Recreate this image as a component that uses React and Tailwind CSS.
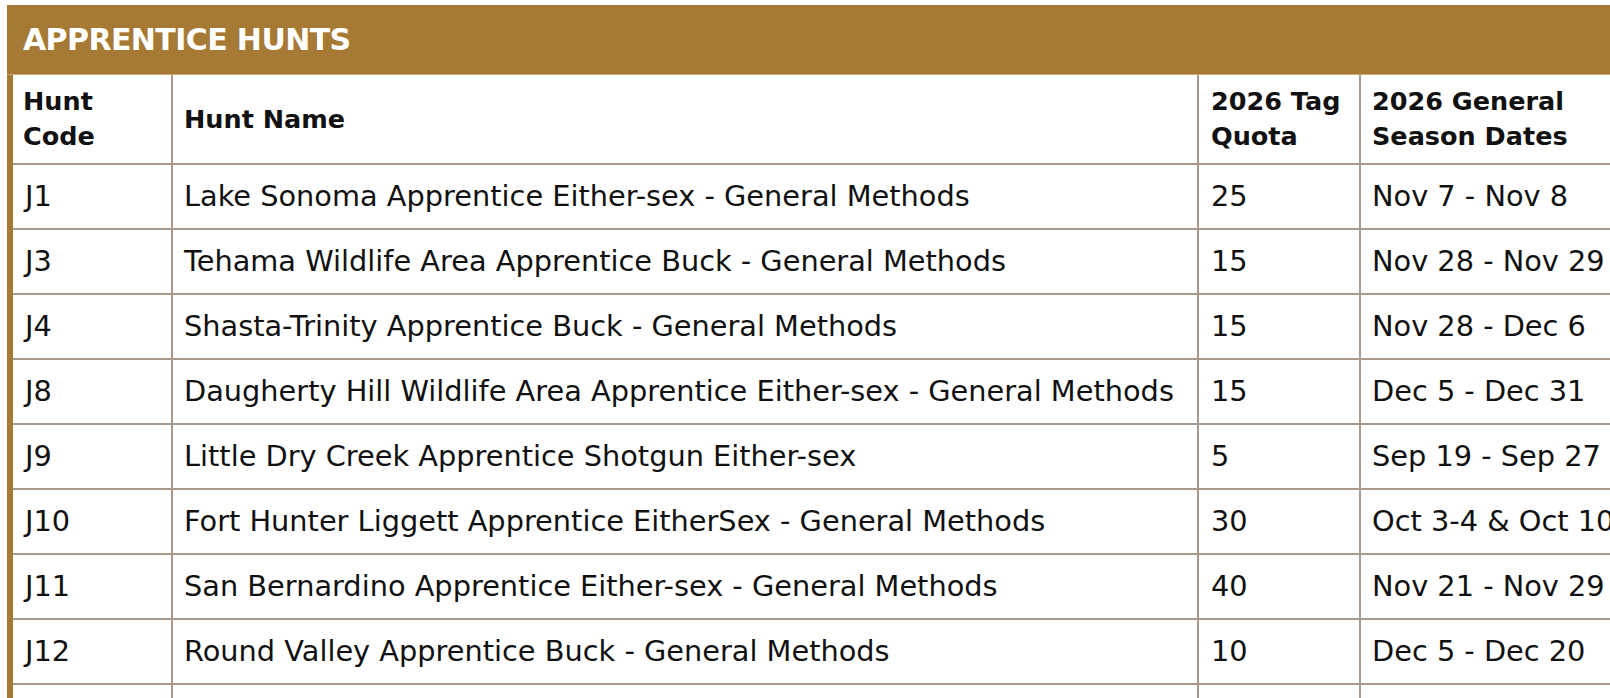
import React from 'react';

const hunts = [
  { code: 'J1', name: 'Lake Sonoma Apprentice Either-sex - General Methods', quota: '25', dates: 'Nov 7 - Nov 8' },
  { code: 'J3', name: 'Tehama Wildlife Area Apprentice Buck - General Methods', quota: '15', dates: 'Nov 28 - Nov 29' },
  { code: 'J4', name: 'Shasta-Trinity Apprentice Buck - General Methods', quota: '15', dates: 'Nov 28 - Dec 6' },
  { code: 'J8', name: 'Daugherty Hill Wildlife Area Apprentice Either-sex - General Methods', quota: '15', dates: 'Dec 5 - Dec 31' },
  { code: 'J9', name: 'Little Dry Creek Apprentice Shotgun Either-sex', quota: '5', dates: 'Sep 19 - Sep 27' },
  { code: 'J10', name: 'Fort Hunter Liggett Apprentice EitherSex - General Methods', quota: '30', dates: 'Oct 3-4 & Oct 10-11' },
  { code: 'J11', name: 'San Bernardino Apprentice Either-sex - General Methods', quota: '40', dates: 'Nov 21 - Nov 29' },
  { code: 'J12', name: 'Round Valley Apprentice Buck - General Methods', quota: '10', dates: 'Dec 5 - Dec 20' },
  { code: '', name: '', quota: '', dates: '' },
];

const grid = 'grid grid-cols-[160px_1026px_162px_340px]';
const cell = 'flex items-center border-r-2 border-b-2 border-[#a8998f] whitespace-nowrap';

export default function App() {
  return (
    <div className="w-full h-screen overflow-hidden bg-white text-[#111]" style={{ fontFamily: '"DejaVu Sans", sans-serif' }}>
      <div className="ml-[7px] mt-[5px] w-[1700px]">
        <div className="h-[70px] bg-[#a67934] border-b border-[#c9a978] flex items-center pl-[16px]">
          <h1 className="text-[30px] font-bold text-white leading-none tracking-[-0.6px]">APPRENTICE HUNTS</h1>
        </div>

        <div className="border-l-[6px] border-[#a67934]">
          <div className={`${grid} h-[90px] text-[25.5px] font-bold leading-[35px]`}>
            <div className={`${cell} pl-[10px]`}>
              <span>Hunt<br />Code</span>
            </div>
            <div className={`${cell} pl-[11px]`}>Hunt Name</div>
            <div className={`${cell} pl-[12px]`}>
              <span>2026 Tag<br />Quota</span>
            </div>
            <div className={`${cell} pl-[11px]`}>
              <span>2026 General<br />Season Dates</span>
            </div>
          </div>

          {hunts.map((hunt, i) => (
            <div key={i} className={`${grid} h-[65px] text-[28.8px] leading-none`}>
              <div className={`${cell} pl-[12px]`}>{hunt.code}</div>
              <div className={`${cell} pl-[11px]`}>{hunt.name}</div>
              <div className={`${cell} pl-[12px]`}>{hunt.quota}</div>
              <div className={`${cell} pl-[11px]`}>{hunt.dates}</div>
            </div>
          ))}
        </div>
      </div>
    </div>
  );
}
